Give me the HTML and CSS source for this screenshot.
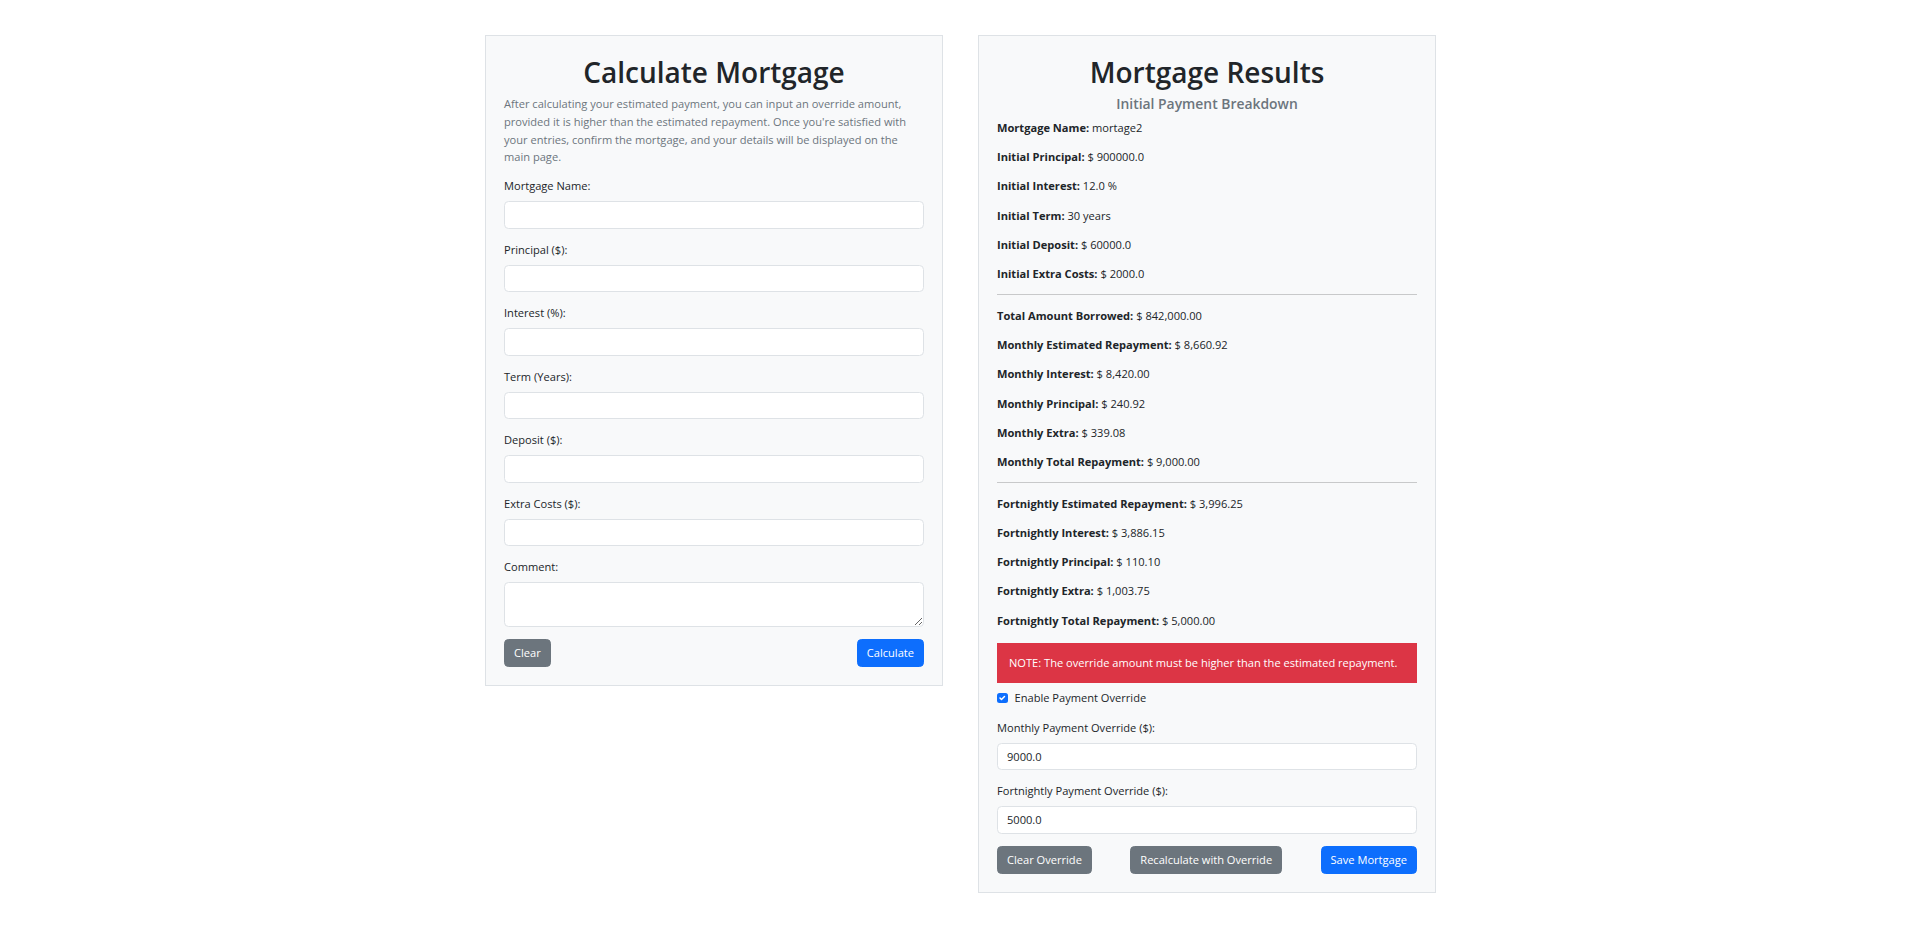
FILE: index.html
```html
<!DOCTYPE html>
<html lang="en">
<head>
<meta charset="utf-8">
<title>Mortgage Calculator</title>
<link rel="stylesheet" href="styles.css">
</head>
<body>
<main class="page">
  <section class="card">
    <h1 class="title">Calculate Mortgage</h1>
    <p class="intro">After calculating your estimated payment, you can input an override amount, provided it is higher than the estimated repayment. Once you're satisfied with your entries, confirm the mortgage, and your details will be displayed on the main page.</p>
    <form class="form">
      <div class="field"><label class="label" for="name">Mortgage Name:</label><input class="control" id="name" type="text"></div>
      <div class="field"><label class="label" for="principal">Principal ($):</label><input class="control" id="principal" type="text"></div>
      <div class="field"><label class="label" for="interest">Interest (%):</label><input class="control" id="interest" type="text"></div>
      <div class="field"><label class="label" for="term">Term (Years):</label><input class="control" id="term" type="text"></div>
      <div class="field"><label class="label" for="deposit">Deposit ($):</label><input class="control" id="deposit" type="text"></div>
      <div class="field"><label class="label" for="extra">Extra Costs ($):</label><input class="control" id="extra" type="text"></div>
      <div class="field"><label class="label" for="comment">Comment:</label><textarea class="control area" id="comment"></textarea></div>
      <div class="actions">
        <button type="button" class="btn btn-gray">Clear</button>
        <button type="button" class="btn btn-blue">Calculate</button>
      </div>
    </form>
  </section>

  <section class="card">
    <h1 class="title">Mortgage Results</h1>
    <h5 class="subtitle">Initial Payment Breakdown</h5>
    <p class="row"><strong>Mortgage Name:</strong> mortage2</p>
    <p class="row"><strong>Initial Principal:</strong> $ 900000.0</p>
    <p class="row"><strong>Initial Interest:</strong> 12.0 %</p>
    <p class="row"><strong>Initial Term:</strong> 30 years</p>
    <p class="row"><strong>Initial Deposit:</strong> $ 60000.0</p>
    <p class="row"><strong>Initial Extra Costs:</strong> $ 2000.0</p>
    <hr class="rule">
    <p class="row"><strong>Total Amount Borrowed:</strong> $ 842,000.00</p>
    <p class="row"><strong>Monthly Estimated Repayment:</strong> $ 8,660.92</p>
    <p class="row"><strong>Monthly Interest:</strong> $ 8,420.00</p>
    <p class="row"><strong>Monthly Principal:</strong> $ 240.92</p>
    <p class="row"><strong>Monthly Extra:</strong> $ 339.08</p>
    <p class="row"><strong>Monthly Total Repayment:</strong> $ 9,000.00</p>
    <hr class="rule">
    <p class="row"><strong>Fortnightly Estimated Repayment:</strong> $ 3,996.25</p>
    <p class="row"><strong>Fortnightly Interest:</strong> $ 3,886.15</p>
    <p class="row"><strong>Fortnightly Principal:</strong> $ 110.10</p>
    <p class="row"><strong>Fortnightly Extra:</strong> $ 1,003.75</p>
    <p class="row"><strong>Fortnightly Total Repayment:</strong> $ 5,000.00</p>
    <div class="alert">NOTE: The override amount must be higher than the estimated repayment.</div>
    <div class="check">
      <span class="check-box"><svg viewBox="0 0 20 20" width="10" height="10"><path d="M6 10l3 3l6-6" fill="none" stroke="#fff" stroke-width="3" stroke-linecap="round" stroke-linejoin="round"/></svg></span>
      <span class="check-label">Enable Payment Override</span>
    </div>
    <div class="field"><label class="label" for="mo">Monthly Payment Override ($):</label><input class="control" id="mo" type="text" value="9000.0"></div>
    <div class="field"><label class="label" for="fo">Fortnightly Payment Override ($):</label><input class="control" id="fo" type="text" value="5000.0"></div>
    <div class="actions">
      <button type="button" class="btn btn-gray">Clear Override</button>
      <button type="button" class="btn btn-gray">Recalculate with Override</button>
      <button type="button" class="btn btn-blue">Save Mortgage</button>
    </div>
  </section>
</main>
</body>
</html>
```

FILE: styles.css
```css
* { box-sizing: border-box; }

html, body {
  margin: 0;
  background: #ffffff;
}

body {
  font-family: "Open Sans", "Noto Sans", sans-serif;
  font-size: 11.1px;
  line-height: 18px;
  color: #212529;
}

.page {
  display: flex;
  justify-content: center;
  align-items: flex-start;
  gap: 35px;
  padding-top: 35px;
}

.card {
  width: 458px;
  background: #f8f9fa;
  border: 1px solid #dee2e6;
  padding: 18px;
}

.title {
  margin: 0 0 5px;
  font-size: 28px;
  font-weight: 600;
  line-height: 36px;
  text-align: center;
  color: #212529;
}

.intro {
  margin: 0 0 11px;
  line-height: 17.8px;
  color: #6c757d;
}

.form { margin: 0; }

.field { margin-bottom: 12px; }

.label {
  display: block;
  margin-bottom: 6px;
  line-height: 18px;
}

.control {
  display: block;
  width: 100%;
  height: 27.5px;
  margin: 0;
  padding: 4px 9px;
  font-family: inherit;
  font-size: 11.1px;
  line-height: 18px;
  color: #212529;
  background: #ffffff;
  border: 1px solid #dee2e6;
  border-radius: 4.5px;
  outline: none;
}

.area {
  height: 45px;
  resize: vertical;
}

.actions {
  display: flex;
  justify-content: space-between;
  align-items: center;
}

.btn {
  height: 28px;
  padding: 0 9px;
  font-family: inherit;
  font-size: 11.1px;
  line-height: 18px;
  color: #ffffff;
  border: 1px solid transparent;
  border-radius: 4.5px;
  cursor: pointer;
}

.btn-gray { background: #6c757d; border-color: #6c757d; }
.btn-blue { background: #0d6efd; border-color: #0d6efd; }

.subtitle {
  margin: 0 0 6px;
  font-size: 13.9px;
  font-weight: 600;
  line-height: 18px;
  text-align: center;
  color: #6c757d;
}

.row {
  margin: 0 0 11.2px;
  line-height: 18px;
}

.row strong { font-weight: 700; }

.rule {
  margin: 11.5px 0;
  border: 0;
  border-top: 1px solid #c8c9ca;
}

.alert {
  margin: 13px 0 6px;
  padding: 11.2px 12px;
  background: #dc3545;
  color: #ffffff;
  line-height: 18px;
}

.check {
  display: flex;
  align-items: center;
  gap: 7px;
  margin-bottom: 11.6px;
  line-height: 18px;
}

.check-box {
  display: inline-flex;
  align-items: center;
  justify-content: center;
  width: 10.5px;
  height: 10.5px;
  background: #0d6efd;
  border-radius: 2.5px;
}

.check-box svg { display: block; }
```
